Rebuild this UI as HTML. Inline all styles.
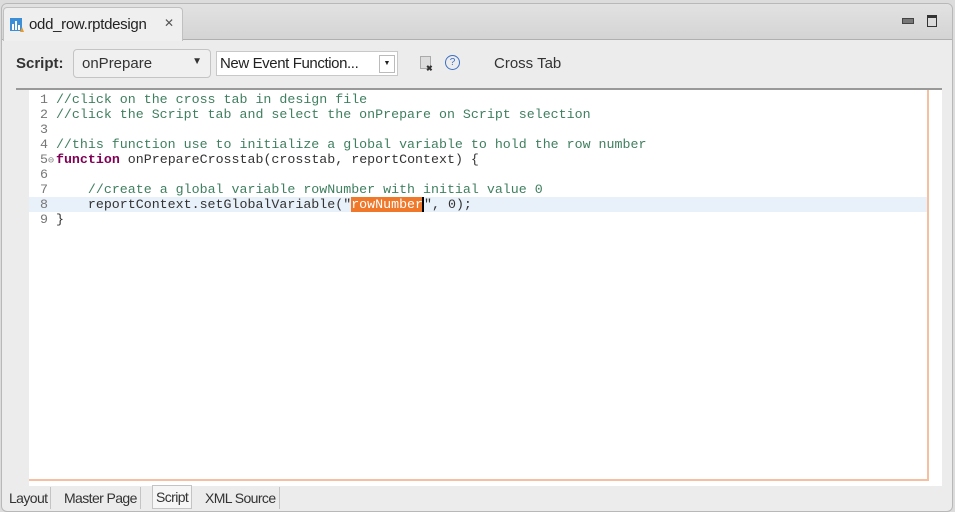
<!DOCTYPE html>
<html><head><style>
body{margin:0;width:955px;height:512px;background:#dcdcdc;font-family:"Liberation Sans",sans-serif;position:relative;overflow:hidden}
.frame{position:absolute;left:1px;top:3px;width:950px;height:507px;background:#ececec;border:1px solid #b8b8b8;border-radius:6px}
.tabbar{position:absolute;left:0;top:0;right:0;height:35px;background:linear-gradient(#e2e2e2,#d4d4d4);border-bottom:1px solid #b0b0b0;border-radius:6px 6px 0 0}
.tab{position:absolute;left:1px;top:3px;width:178px;height:33px;background:#efefef;border:1px solid #c0c0c0;border-bottom:none;border-radius:4px 4px 0 0;font-size:15px;color:#222}
.editor{position:absolute;left:14px;top:84px;width:926px;height:396px;background:#fff;border-top:2px solid #999}
.gutter{position:absolute;left:0;top:0;width:13px;bottom:0;background:#ececec}
.line{position:absolute;left:16px;font-family:"Liberation Mono",monospace;font-size:13.3px;line-height:15px;white-space:pre;color:#333}
.c{color:#3f7f5f}.k{color:#7f0055;font-weight:bold}
.n{color:#777}
.bt{position:absolute;top:483px;font-size:14px;letter-spacing:-0.6px;color:#333;height:22px;line-height:22px;padding:0 3px;border-right:1px solid #c4c4c4}
</style></head><body>
<div class="frame">
<div class="tabbar">
 <div class="tab">
  <svg style="position:absolute;left:5px;top:9px" width="16" height="16"><rect x="1" y="1" width="12" height="13" fill="#3c8fd6"/><rect x="3" y="7" width="2" height="6" fill="#fff"/><rect x="6" y="4" width="2" height="9" fill="#fff"/><rect x="9" y="8" width="2" height="5" fill="#fff"/><path d="M11 15 L15 15 L13 10 Z" fill="#e89a2a"/></svg>
  <span style="position:absolute;left:25px;top:8px;letter-spacing:-0.3px">odd_row.rptdesign</span>
  <span style="position:absolute;left:160px;top:8px;font-size:12px;color:#555">✕</span>
 </div>
 <div style="position:absolute;left:900px;top:14px;width:10px;height:4px;background:#777;border:1px solid #444"></div>
 <div style="position:absolute;left:925px;top:11px;width:8px;height:8px;border:1px solid #333;border-top:3px solid #333"></div>
</div>
<div style="position:absolute;left:14px;top:51px;font-size:15px;font-weight:bold;color:#333">Script:</div>
<div style="position:absolute;left:71px;top:45px;width:136px;height:27px;border:1px solid #c4c4c4;border-radius:4px;background:#f0f0f0;font-size:15px;color:#333"><span style="position:absolute;left:8px;top:5px">onPrepare</span><span style="position:absolute;right:8px;top:6px;font-size:10px">▼</span></div>
<div style="position:absolute;left:214px;top:47px;width:180px;height:23px;border:1px solid #c8c8c8;background:#fff;font-size:15px;color:#222"><span style="position:absolute;left:3px;top:3px;letter-spacing:-0.4px">New Event Function...</span><span style="position:absolute;right:2px;top:3px;width:14px;height:16px;border:1px solid #bbb;font-size:7px;text-align:center;line-height:16px">▼</span></div>
<div style="position:absolute;left:418px;top:52px;width:9px;height:11px;background:#ddd;border:1px solid #aaa"></div>
<div style="position:absolute;left:424px;top:60px;font-size:8px;color:#333;font-weight:bold">✖</div>
<div style="position:absolute;left:443px;top:51px;width:13px;height:13px;border:1px solid #3a6fc8;border-radius:50%;font-size:10px;color:#3a6fc8;text-align:center;line-height:13px">?</div>
<div style="position:absolute;left:492px;top:51px;font-size:15px;color:#333">Cross Tab</div>
<div class="editor">
 <div class="gutter"></div>
 <div style="position:absolute;left:13px;top:107px;width:898px;height:15px;background:#e8f0fa"></div>
 <div style="position:absolute;left:911px;top:0;width:2px;height:390px;background:#f4c0a0"></div>
 <div style="position:absolute;left:13px;top:389px;width:900px;height:2px;background:#f4c0a0"></div>
 <div class="line" style="top:2px"><span class="n"> 1 </span><span class="c">//click on the cross tab in design file</span></div>
 <div class="line" style="top:17px"><span class="n"> 2 </span><span class="c">//click the Script tab and select the onPrepare on Script selection</span></div>
 <div class="line" style="top:32px"><span class="n"> 3 </span></div>
 <div class="line" style="top:47px"><span class="n"> 4 </span><span class="c">//this function use to initialize a global variable to hold the row number</span></div>
 <div class="line" style="top:62px"><span class="n"> 5</span><span style="display:inline-block;width:8px;color:#888;font-size:10px">⊖</span><span class="k">function</span> onPrepareCrosstab(crosstab, reportContext) {</div>
 <div class="line" style="top:77px"><span class="n"> 6 </span></div>
 <div class="line" style="top:92px"><span class="n"> 7 </span>    <span class="c">//create a global variable rowNumber with initial value 0</span></div>
 <div class="line" style="top:107px"><span class="n"> 8 </span>    reportContext.setGlobalVariable("<span style="background:#f0782a;color:#fff">rowNumber</span><span style="border-left:2px solid #000;margin-left:-1px"></span>", 0);</div>
 <div class="line" style="top:122px"><span class="n"> 9 </span>}</div>
</div>
<div class="bt" style="left:4px">Layout</div>
<div class="bt" style="left:59px">Master Page</div>
<div class="bt" style="left:150px;background:#f6f6f6;border:1px solid #c4c4c4;top:481px">Script</div>
<div class="bt" style="left:200px">XML Source</div>
</div>
</body></html>
